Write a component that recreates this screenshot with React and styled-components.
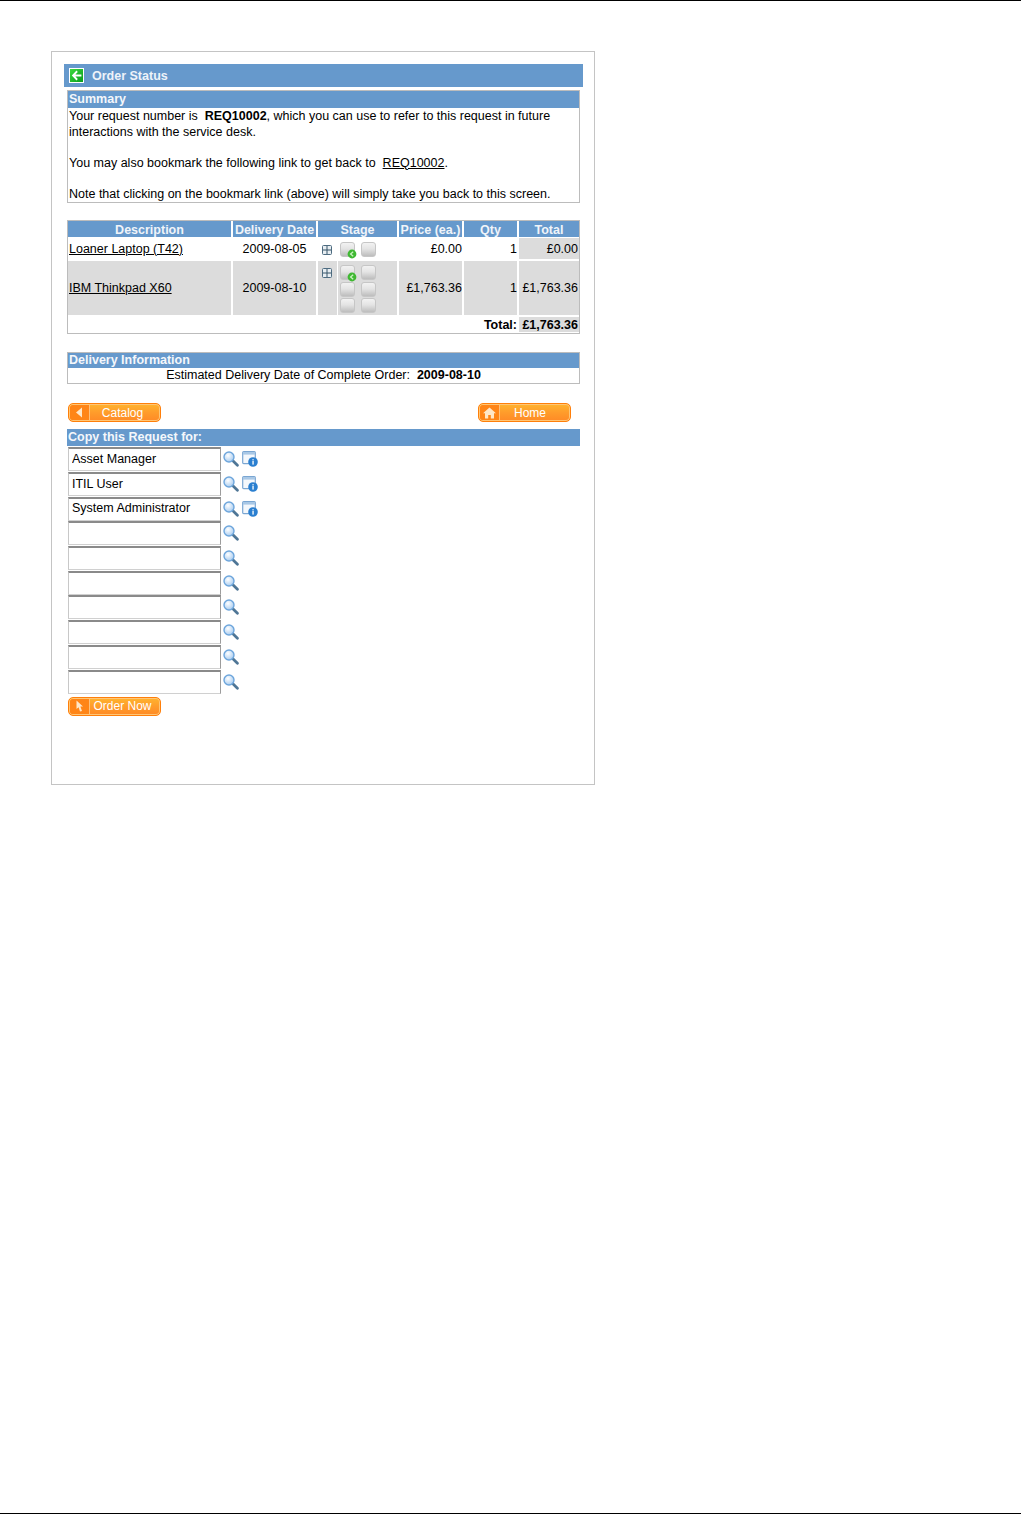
import React from 'react';
import styled, { createGlobalStyle } from 'styled-components';

const GlobalStyle = createGlobalStyle`
  html, body {
    margin: 0;
    padding: 0;
    background: #fff;
  }
  body {
    font-family: "Liberation Sans", Arial, sans-serif;
    font-size: 12.5px;
    color: #000;
  }
`;

const Page = styled.div`
  box-sizing: border-box;
  height: 1514px;
  padding: 50px 0 0 51px;
  border-top: 1px solid #000;
  border-bottom: 1px solid #000;
`;

const Panel = styled.div`
  box-sizing: border-box;
  width: 544px;
  height: 734px;
  padding: 12px;
  border: 1px solid #c4c4c4;
`;

const TitleBar = styled.div`
  display: flex;
  align-items: center;
  height: 23px;
  margin-right: -1px;
  padding-left: 5px;
  background: #6699cc;
  color: #eef3f9;
  font-weight: bold;
`;

const TitleText = styled.span`
  margin-left: 8px;
`;

const Content = styled.div`
  width: 513px;
  margin: 3px 0 0 3px;
`;

const Box = styled.div`
  box-sizing: border-box;
  border: 1px solid #bcbcbc;
  margin-top: ${(props) => props.$top || 0}px;
  height: ${(props) => props.$height}px;
`;

const SectionHeader = styled.div`
  height: ${(props) => props.$height || 17}px;
  line-height: ${(props) => props.$height || 17}px;
  padding-left: 1px;
  background: #6699cc;
  color: #f4f7fb;
  font-weight: bold;
  white-space: nowrap;
`;

const SummaryText = styled.div`
  padding: 1px 0 0 1px;
  line-height: 15.5px;
`;

const BlankLine = styled.div`
  height: 15.5px;
`;

const Link = styled.a`
  color: #000;
  text-decoration: underline;
`;

const OrderGrid = styled.div`
  display: grid;
  grid-template-columns: 163px 83px 79px 63px 53px 60px;
  grid-template-rows: 15px 21px 54px 15px;
  column-gap: 2px;
  row-gap: 2px;
`;

const Row = styled.div`
  display: contents;
`;

const HeadCell = styled.div`
  margin-bottom: -1px;
  line-height: 18px;
  background: #6699cc;
  color: #f0f4f9;
  font-weight: bold;
  text-align: center;
  white-space: nowrap;
  overflow: hidden;
`;

const Cell = styled.div`
  display: flex;
  align-items: center;
  justify-content: ${(props) => props.$align || 'flex-start'};
  padding: ${(props) => props.$padding || '0'};
  background: ${(props) => (props.$gray ? '#dcdcdc' : 'transparent')};
  white-space: nowrap;
`;

const NumberCell = styled(Cell)`
  justify-content: flex-end;
  padding-right: ${(props) => props.$inset || 0}px;
`;

const StageCell = styled.div`
  display: flex;
  gap: 1px;
`;

const ExpandPart = styled.div`
  flex: 0 0 19px;
  padding: 7px 0 0 4px;
  box-sizing: border-box;
  background: ${(props) => (props.$gray ? '#dcdcdc' : 'transparent')};
`;

const StagesPart = styled.div`
  flex: 1;
  padding: 4px 0 0 2px;
  background: ${(props) => (props.$gray ? '#dcdcdc' : 'transparent')};
`;

const StageGrid = styled.div`
  display: grid;
  grid-template-columns: 15px 15px;
  grid-auto-rows: 15px;
  column-gap: 6px;
  row-gap: 1.5px;
`;

const StageBox = styled.div`
  position: relative;
  border: 1px solid #c6c6c6;
  border-radius: 3px;
  box-sizing: border-box;
  background: linear-gradient(#f2f2f2 0%, #e4e4e4 45%, #bdbdbd 100%);
`;

const StageDot = styled.svg`
  position: absolute;
  right: -3px;
  bottom: -3px;
  width: 10px;
  height: 10px;
`;

const TotalLabel = styled(NumberCell)`
  grid-column: 1 / 6;
  font-weight: bold;
`;

const TotalValue = styled(NumberCell)`
  font-weight: bold;
`;

const DeliveryText = styled.div`
  line-height: 15px;
  text-align: center;
`;

const ButtonBar = styled.div`
  display: flex;
  justify-content: space-between;
  margin: 19px 9px 0 1px;
`;

const OrangeButton = styled.div`
  box-sizing: border-box;
  display: flex;
  align-items: center;
  width: 93px;
  height: 19px;
  border: 1px solid #ff7f0a;
  border-radius: 5px;
  background: linear-gradient(#ffb42e 0%, #ff9c2b 50%, #ff8a26 100%);
  box-shadow: inset 0 0 0 1px #ffc676;
  color: #fff;
  font-size: 12px;
  overflow: hidden;
`;

const ButtonIcon = styled.div`
  flex: 0 0 19px;
  align-self: stretch;
  display: flex;
  align-items: center;
  justify-content: center;
  margin: 1px 0 1px 1px;
  border-radius: 3px 0 0 3px;
  border-right: 1px solid #ffc07a;
  background: #ff8517;
`;

const ButtonLabel = styled.span`
  flex: 1;
  padding-right: ${(props) => props.$pad || 5}px;
  text-align: center;
  white-space: nowrap;
`;

const CopyHeader = styled(SectionHeader)`
  margin-top: 7px;
`;

const RequestList = styled.div`
  margin: 1px 0 3px 1px;
`;

const RequestRow = styled.div`
  display: flex;
  align-items: center;
  height: 24.7px;
`;

const RoleInput = styled.input`
  box-sizing: border-box;
  width: 153px;
  height: 24px;
  margin: 0;
  padding: 0 3px 2px;
  border-style: solid;
  border-width: 2px 1px 1px 1px;
  border-color: #8a8a8a #9c9c9c #d0d0d0 #c8c8c8;
  border-radius: 0;
  outline: none;
  background: #fff;
  color: #000;
  font-family: "Liberation Sans", Arial, sans-serif;
  font-size: 12.5px;
`;

const IconGroup = styled.div`
  display: flex;
  align-items: center;
  gap: 3px;
  margin-left: 2px;
`;

const OrderButtonWrap = styled.div`
  margin: 3px 0 0 1px;
`;

const BackIcon = () => (
  <svg width="15" height="15" viewBox="0 0 15 15">
    <defs>
      <linearGradient id="backFill" x1="0" y1="0" x2="1" y2="1">
        <stop offset="0" stopColor="#3fdc3f" />
        <stop offset="1" stopColor="#069a1c" />
      </linearGradient>
    </defs>
    <rect x="0.5" y="0.5" width="14" height="14" fill="url(#backFill)" stroke="#fff" />
    <path d="M7.5 2.6 L2.8 7.5 L7.5 12.4 L8.8 11.1 L6.4 8.6 H12.4 V6.4 H6.4 L8.8 3.9 Z" fill="#fff" />
  </svg>
);

const ExpandIcon = () => (
  <svg width="10" height="10" viewBox="0 0 10 10" style={{ display: 'block' }}>
    <rect x="0.5" y="0.5" width="9" height="9" rx="1" fill="#e8eef2" stroke="#4d6b80" />
    <path d="M5 1 V9 M1 5 H9" stroke="#365468" fill="none" />
  </svg>
);

const GreenDot = () => (
  <StageDot viewBox="0 0 10 10">
    <circle cx="5" cy="5" r="4.4" fill="#3fb832" />
    <path d="M6.2 2.8 L3.6 5 L6.2 7.2" fill="none" stroke="#c9f2c0" strokeWidth="1.3" />
  </StageDot>
);

const SearchIcon = () => (
  <svg width="16" height="16" viewBox="0 0 16 16" style={{ display: 'block' }}>
    <defs>
      <radialGradient id="lensFill" cx="0.4" cy="0.35" r="0.7">
        <stop offset="0" stopColor="#ffffff" />
        <stop offset="1" stopColor="#a3c9ef" />
      </radialGradient>
    </defs>
    <path d="M9.6 9.6 L14.4 14.2" stroke="#4f7696" strokeWidth="2.8" strokeLinecap="round" />
    <circle cx="6" cy="6" r="5" fill="url(#lensFill)" stroke="#6ea6dc" strokeWidth="1.4" />
  </svg>
);

const InfoIcon = () => (
  <svg width="16" height="16" viewBox="0 0 16 16" style={{ display: 'block' }}>
    <rect x="0.7" y="0.7" width="12.6" height="12" rx="1" fill="#f4f8fc" stroke="#7aa6d2" strokeWidth="1.2" />
    <rect x="1" y="1" width="12" height="2.6" fill="#a9c8e6" />
    <circle cx="11" cy="11" r="4.8" fill="#2a7fd0" />
    <rect x="10.4" y="10" width="1.3" height="3.6" fill="#fff" />
    <rect x="10.4" y="8.2" width="1.3" height="1.2" fill="#fff" />
  </svg>
);

const ArrowGlyph = () => (
  <svg width="9" height="11" viewBox="0 0 9 11">
    <path d="M7 0.5 V10.5 L1 5.5 Z" fill="#ffe7c8" />
  </svg>
);

const HomeGlyph = () => (
  <svg width="13" height="12" viewBox="0 0 13 12">
    <path d="M6.5 0.5 L13 6.2 H11 V11.5 H7.8 V8 H5.2 V11.5 H2 V6.2 H0 Z" fill="#ffe7c8" />
  </svg>
);

const CursorGlyph = () => (
  <svg width="9" height="12" viewBox="0 0 9 12">
    <path d="M1.5 0.5 L8 6.5 H5.4 L7 11 L5 11.5 L3.6 7.2 L1.5 9 Z" fill="#ffe7c8" />
  </svg>
);

const roles = ['Asset Manager', 'ITIL User', 'System Administrator', '', '', '', '', '', '', ''];

const App = () => (
  <>
    <GlobalStyle />
    <Page>
      <Panel>
        <TitleBar>
          <BackIcon />
          <TitleText>Order Status</TitleText>
        </TitleBar>
        <Content>
          <Box $height={113}>
            <SectionHeader>Summary</SectionHeader>
            <SummaryText>
              Your request number is&nbsp; <b>REQ10002</b>, which you can use to refer to this request in future interactions with the service desk.
              <BlankLine />
              You may also bookmark the following link to get back to&nbsp; <Link href="#">REQ10002</Link>.
              <BlankLine />
              Note that clicking on the bookmark link (above) will simply take you back to this screen.
            </SummaryText>
          </Box>

          <Box $top={17} $height={114}>
            <OrderGrid>
              <Row>
                <HeadCell>Description</HeadCell>
                <HeadCell>Delivery Date</HeadCell>
                <HeadCell>Stage</HeadCell>
                <HeadCell>Price (ea.)</HeadCell>
                <HeadCell>Qty</HeadCell>
                <HeadCell>Total</HeadCell>
              </Row>
              <Row>
                <Cell $padding="0 0 0 1px"><Link href="#">Loaner Laptop (T42)</Link></Cell>
                <Cell $align="center">2009-08-05</Cell>
                <StageCell>
                  <ExpandPart><ExpandIcon /></ExpandPart>
                  <StagesPart>
                    <StageGrid>
                      <StageBox><GreenDot /></StageBox>
                      <StageBox />
                    </StageGrid>
                  </StagesPart>
                </StageCell>
                <NumberCell>£0.00</NumberCell>
                <NumberCell>1</NumberCell>
                <NumberCell $inset={1} $gray>£0.00</NumberCell>
              </Row>
              <Row>
                <Cell $padding="0 0 0 1px" $gray><Link href="#">IBM Thinkpad X60</Link></Cell>
                <Cell $align="center" $gray>2009-08-10</Cell>
                <StageCell>
                  <ExpandPart $gray><ExpandIcon /></ExpandPart>
                  <StagesPart $gray>
                    <StageGrid>
                      <StageBox><GreenDot /></StageBox>
                      <StageBox />
                      <StageBox />
                      <StageBox />
                      <StageBox />
                      <StageBox />
                    </StageGrid>
                  </StagesPart>
                </StageCell>
                <NumberCell $gray>£1,763.36</NumberCell>
                <NumberCell $gray>1</NumberCell>
                <NumberCell $inset={1} $gray>£1,763.36</NumberCell>
              </Row>
              <Row>
                <TotalLabel>Total:</TotalLabel>
                <TotalValue $inset={1} $gray>£1,763.36</TotalValue>
              </Row>
            </OrderGrid>
          </Box>

          <Box $top={18} $height={32}>
            <SectionHeader $height={15}>Delivery Information</SectionHeader>
            <DeliveryText>
              Estimated Delivery Date of Complete Order:&nbsp; <b>2009-08-10</b>
            </DeliveryText>
          </Box>

          <ButtonBar>
            <OrangeButton>
              <ButtonIcon><ArrowGlyph /></ButtonIcon>
              <ButtonLabel>Catalog</ButtonLabel>
            </OrangeButton>
            <OrangeButton>
              <ButtonIcon><HomeGlyph /></ButtonIcon>
              <ButtonLabel $pad={10}>Home</ButtonLabel>
            </OrangeButton>
          </ButtonBar>

          <CopyHeader>Copy this Request for:</CopyHeader>
          <RequestList>
            {roles.map((role, index) => (
              <RequestRow key={index}>
                <RoleInput readOnly value={role} />
                <IconGroup>
                  <SearchIcon />
                  {role && <InfoIcon />}
                </IconGroup>
              </RequestRow>
            ))}
          </RequestList>
          <OrderButtonWrap>
            <OrangeButton>
              <ButtonIcon><CursorGlyph /></ButtonIcon>
              <ButtonLabel>Order Now</ButtonLabel>
            </OrangeButton>
          </OrderButtonWrap>
        </Content>
      </Panel>
    </Page>
  </>
);

export default App;
